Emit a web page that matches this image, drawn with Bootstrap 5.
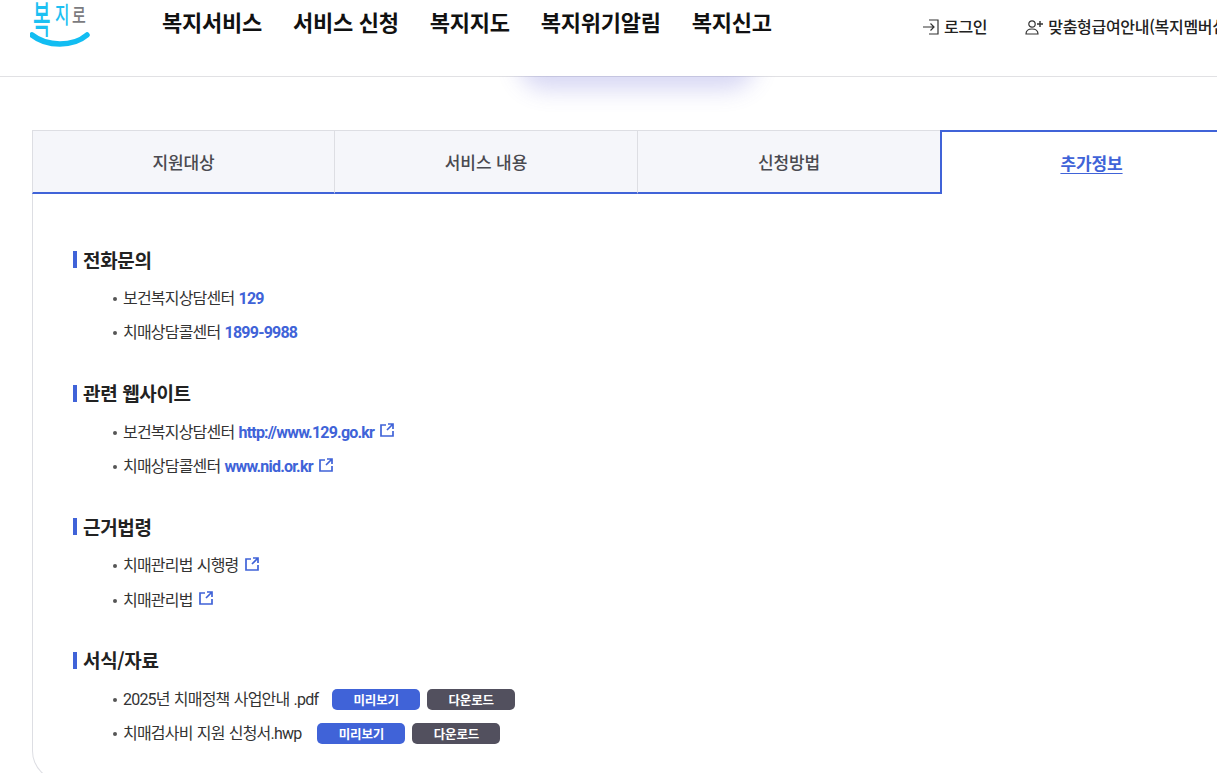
<!DOCTYPE html>
<html lang="ko">
<head>
<meta charset="utf-8">
<title>복지로</title>
<link href="https://cdn.jsdelivr.net/npm/bootstrap@5.3.0/dist/css/bootstrap.min.css" rel="stylesheet">
<style>
html,body{height:773px;overflow:hidden;background:#fff}
body{font-family:"Roboto","Noto Sans CJK KR",sans-serif;color:#222;width:1217px}
.site-head{height:77px;border-bottom:1px solid #e1e1e4;position:relative;background:#fff;overflow:visible;width:1217px}
.head-clip{height:76px;overflow:hidden;position:relative;z-index:2}
.logo-box{width:162px;padding-left:33px;flex:none}
.logo-word{font-family:"Noto Sans CJK KR",sans-serif;height:32px;color:#1cc0f2;white-space:nowrap;font-weight:500;display:flex;align-items:flex-start}
.logo-word span{display:inline-block;transform-origin:0 0;line-height:1}
.logo-a{font-size:38px;width:22px;margin-top:-2px;transform:scaleX(.5)}
.logo-b{font-size:23px;width:17px;margin-top:2px;transform:scaleX(.68)}
.logo-c{font-size:20px;margin-top:5px;color:#7b7b80;transform:scaleX(.75)}
.logo-smile{display:block;width:60px;height:16px;margin-left:-3px}
.gnb{gap:31px;padding-top:8px;width:760px;flex:none;margin-top:-3px}
.gnb-item{font-family:"Noto Sans CJK KR",sans-serif;font-size:22px;font-weight:700;line-height:32px;color:#111;letter-spacing:-.25px;white-space:nowrap;text-decoration:none}
.util{font-family:"Noto Sans CJK KR",sans-serif;font-size:16px;font-weight:500;color:#222;letter-spacing:-.3px;white-space:nowrap;line-height:24px;padding-top:14px;text-decoration:none}
.util svg{margin-top:4px}
.util-two{margin-left:38px}
.glow{position:absolute;left:526px;top:56px;width:222px;height:20px;box-shadow:0 6px 22px 8px rgba(90,90,210,.24);border-radius:0 0 30px 30px;z-index:1}
.wrap{margin:53px 0 0 32px;width:1212px}
.tab-row{height:64px}
.tab-cell{flex:0 0 303px;height:64px;background:#f5f6fa;border:1px solid #dddee3;border-left-width:0;border-bottom:2px solid #4063d8;display:flex;align-items:center;justify-content:center;font-family:"Noto Sans CJK KR",sans-serif;font-size:17px;font-weight:500;color:#4a4a50;letter-spacing:-.1px;text-decoration:none;padding-top:1px}
.tab-cell:first-child{border-left-width:1px}
.tab-cell.on{background:#fff;border:0;border-top:2px solid #4063d8;border-left:2px solid #4063d8;color:#4063d8;font-weight:700;text-decoration:underline;text-underline-offset:3px;padding:0 2px 0 0;margin-left:-1px;letter-spacing:-.1px}
.panel{border:1px solid #dddee3;border-top:0;border-radius:0 0 0 30px;padding:57px 0 0 40px;height:587px}
.sect{margin-bottom:34px}
.sect-title{font-family:"Noto Sans CJK KR",sans-serif;font-size:19px;font-weight:700;color:#222;letter-spacing:-.35px;line-height:24px;border-left:4px solid #4063d8;padding-left:6px;height:17px;display:flex;align-items:center;margin:0 0 14px}
.info-list{list-style:none;margin:0;padding:0 0 0 40px}
.info-list li{font-size:16px;line-height:24px;height:34.300px;letter-spacing:-.8px;word-spacing:1px;color:#333;display:flex;align-items:center;white-space:nowrap}
.info-list li::before{content:"";width:4px;height:4px;border-radius:50%;background:#555;margin-right:6px;flex:none}
.info-list a{color:#4063d8;font-weight:700;text-decoration:none}
.ext{width:14px;height:14px;margin-left:6px;margin-top:-5px;flex:none}
.file-btn{font-family:"Noto Sans CJK KR",sans-serif;width:88px;height:21px;padding:0;border:0;border-radius:5px;font-size:12.500px;font-weight:700;line-height:21px;color:#fff;text-align:center;letter-spacing:-.2px;margin-top:-1px}
.info-list li + li .file-btn{margin-top:-2px}
.file-btn.see{background:#4063d8;margin-left:14px}
.file-btn.get{background:#52505e;margin-left:7px}
.info-list li + li .file-btn.see{margin-left:16px}
.btn.file-btn:hover{color:#fff}
</style>
</head>
<body>
<header class="site-head">
  <div class="glow"></div>
  <div class="head-clip d-flex align-items-start bg-white">
    <div class="logo-box">
      <div class="logo-word"><span class="logo-a">복</span><span class="logo-b">지</span><span class="logo-c">로</span></div>
      <svg class="logo-smile" viewBox="0 0 60 16"><path d="M2 3C17 15 43 15 57 3" fill="none" stroke="#12bdf2" stroke-width="5.500" stroke-linecap="round"/></svg>
    </div>
    <nav class="gnb d-flex">
      <a class="gnb-item" href="#">복지서비스</a>
      <a class="gnb-item" href="#">서비스 신청</a>
      <a class="gnb-item" href="#">복지지도</a>
      <a class="gnb-item" href="#">복지위기알림</a>
      <a class="gnb-item" href="#">복지신고</a>
    </nav>
    <a class="util d-flex align-items-start" href="#">
      <svg class="me-1" width="18" height="18" viewBox="0 0 18 18"><path d="M1 9H12M8.500 5.500L12 9L8.500 12.500M7 2H16V16H7" fill="none" stroke="#333" stroke-width="1.200"/></svg>로그인</a>
    <a class="util util-two d-flex align-items-start" href="#">
      <svg class="me-1" width="19" height="18" viewBox="0 0 19 18"><circle cx="7" cy="6" r="3.200" fill="none" stroke="#333" stroke-width="1.200"/><path d="M1 16C1 12 4 11 7 11S13 12 13 16Z" fill="none" stroke="#333" stroke-width="1.200"/><path d="M12 6H18M15 3V9" stroke="#333" stroke-width="1.400"/></svg>맞춤형급여안내(복지멤버십)</a>
  </div>
</header>
<main class="wrap">
  <div class="tab-row d-flex">
    <a class="tab-cell" href="#">지원대상</a>
    <a class="tab-cell" href="#">서비스 내용</a>
    <a class="tab-cell" href="#">신청방법</a>
    <a class="tab-cell on" href="#">추가정보</a>
  </div>
  <div class="panel">
    <section class="sect">
      <h3 class="sect-title">전화문의</h3>
      <ul class="info-list">
        <li>보건복지상담센터&nbsp;<a href="#">129</a></li>
        <li>치매상담콜센터&nbsp;<a href="#">1899-9988</a></li>
      </ul>
    </section>
    <section class="sect">
      <h3 class="sect-title">관련 웹사이트</h3>
      <ul class="info-list">
        <li>보건복지상담센터&nbsp;<a href="#">http://www.129.go.kr</a><svg class="ext" viewBox="0 0 14 14"><path d="M6 2H1V13H13V8M8 1H13V6M13 1L7 7" fill="none" stroke="#4063d8" stroke-width="1.700"/></svg></li>
        <li>치매상담콜센터&nbsp;<a href="#">www.nid.or.kr</a><svg class="ext" viewBox="0 0 14 14"><path d="M6 2H1V13H13V8M8 1H13V6M13 1L7 7" fill="none" stroke="#4063d8" stroke-width="1.700"/></svg></li>
      </ul>
    </section>
    <section class="sect">
      <h3 class="sect-title">근거법령</h3>
      <ul class="info-list">
        <li>치매관리법 시행령<svg class="ext" viewBox="0 0 14 14"><path d="M6 2H1V13H13V8M8 1H13V6M13 1L7 7" fill="none" stroke="#4063d8" stroke-width="1.700"/></svg></li>
        <li>치매관리법<svg class="ext" viewBox="0 0 14 14"><path d="M6 2H1V13H13V8M8 1H13V6M13 1L7 7" fill="none" stroke="#4063d8" stroke-width="1.700"/></svg></li>
      </ul>
    </section>
    <section class="sect">
      <h3 class="sect-title">서식/자료</h3>
      <ul class="info-list">
        <li>2025년 치매정책 사업안내 .pdf<button class="btn file-btn see">미리보기</button><button class="btn file-btn get">다운로드</button></li>
        <li>치매검사비 지원 신청서.hwp<button class="btn file-btn see">미리보기</button><button class="btn file-btn get">다운로드</button></li>
      </ul>
    </section>
  </div>
</main>
<script src="https://cdn.jsdelivr.net/npm/bootstrap@5.3.0/dist/js/bootstrap.bundle.min.js"></script>
</body>
</html>
